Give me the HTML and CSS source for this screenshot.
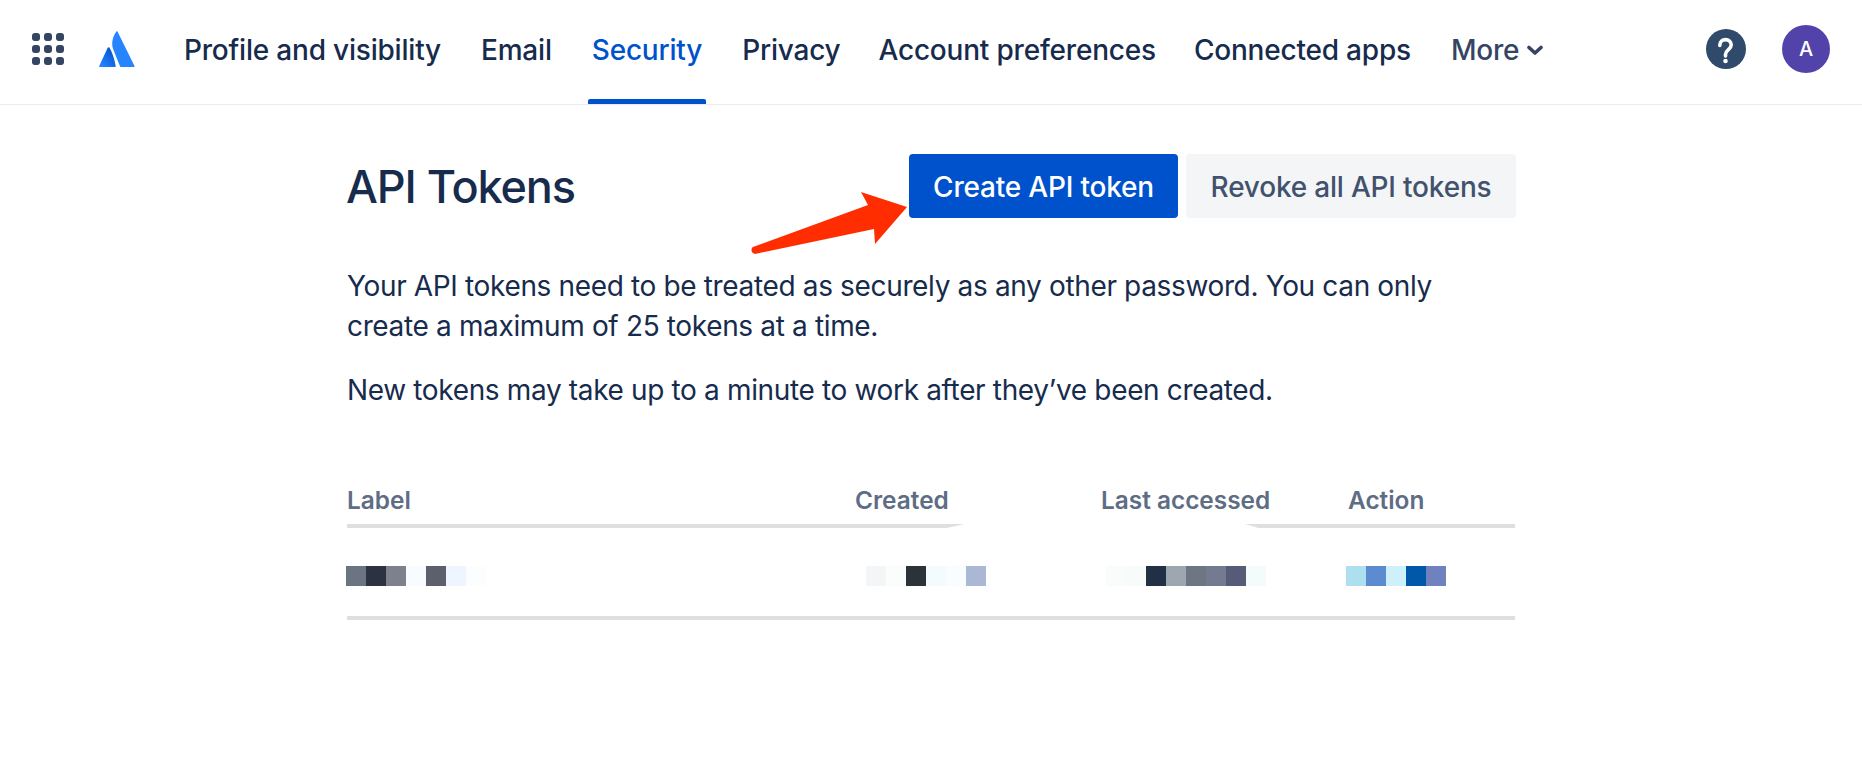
FILE: index.html
```html
<!DOCTYPE html>
<html lang="en">
<head>
<meta charset="utf-8">
<title>API Tokens</title>
<link rel="stylesheet" href="styles.css">
</head>
<body>
<header class="topbar">
  <svg class="apps" width="32" height="32" viewBox="0 0 32 32" aria-hidden="true">
    <rect x="0" y="0" width="8" height="8" rx="3"/><rect x="12" y="0" width="8" height="8" rx="3"/><rect x="24" y="0" width="8" height="8" rx="3"/>
    <rect x="0" y="12" width="8" height="8" rx="3"/><rect x="12" y="12" width="8" height="8" rx="3"/><rect x="24" y="12" width="8" height="8" rx="3"/>
    <rect x="0" y="24" width="8" height="8" rx="3"/><rect x="12" y="24" width="8" height="8" rx="3"/><rect x="24" y="24" width="8" height="8" rx="3"/>
  </svg>
  <svg class="logo" width="36" height="36" viewBox="0 0 36 36" aria-hidden="true">
    <defs><linearGradient id="blade" x1="1" y1="0.2" x2="0.2" y2="1"><stop offset="0" stop-color="#0052cc"/><stop offset="1" stop-color="#2684ff"/></linearGradient></defs>
    <path d="M10.200 16.800c-.4-.7-1.100-.7-1.500 0L.2 34.900c-.3.600 0 1.100.6 1.100h15.400c.4 0 .6-.5.500-.9-1.300-6.700-3.100-13.200-6.500-19.100z" fill="url(#blade)"/>
    <path d="M17.200.7c-3.200 4.400-5.200 11.200-3.100 17.300l7 17.500c.1.300.4.500.7.500h13.100c.6 0 .9-.6.600-1.100L18.600.7c-.3-.6-1-.6-1.400 0z" fill="#2684ff"/>
  </svg>
  <nav class="tabs">
    <a class="tab">Profile and visibility</a>
    <a class="tab">Email</a>
    <a class="tab active">Security</a>
    <a class="tab">Privacy</a>
    <a class="tab tight">Account preferences</a>
    <a class="tab tight">Connected apps</a>
    <a class="tab more">More
      <svg class="chev" width="16" height="11" viewBox="0 0 16 11" aria-hidden="true"><path d="M2 2.500l6 5.500 6-5.500" fill="none" stroke="#344563" stroke-width="3.600" stroke-linecap="round" stroke-linejoin="round"/></svg>
    </a>
  </nav>
  <div class="tools">
    <svg class="help" width="40" height="40" viewBox="0 0 40 40" role="img" aria-label="Help">
      <circle cx="20" cy="20" r="20" fill="#2f4a6b"/>
      <path d="M13.800 16.500c0-3.900 2.600-5.900 5.700-5.900s5.700 2 5.700 5.300c0 4.800-5.700 4.700-5.700 9.700v1.300" fill="none" stroke="#fff" stroke-width="3.600" stroke-linecap="round"/>
      <circle cx="19.500" cy="32" r="2.300" fill="#fff"/>
    </svg>
    <span class="avatar">A</span>
  </div>
</header>

<main class="page">
  <div class="title-row">
    <h1>API Tokens</h1>
    <div class="actions">
      <button class="btn primary">Create API token</button>
      <button class="btn subtle">Revoke all API tokens</button>
    </div>
  </div>
  <p class="lead">Your API tokens need to be treated as securely as any other password. You can only create a maximum of 25 tokens at a time.</p>
  <p class="note">New tokens may take up to a minute to work after they’ve been created.</p>

  <div class="table">
    <div class="head-row">
      <span>Label</span><span>Created</span><span>Last accessed</span><span>Action</span>
    </div>
    <div class="head-rule"><i class="seg left"></i><i class="seg right"></i></div>
    <div class="body-row">
      <svg width="1170" height="20" viewBox="0 0 1170 20" aria-hidden="true">
        <rect x="60" width="20" height="20" fill="#f8fbff"/>
        <rect x="0" width="20" height="20" fill="#6b7482"/><rect x="20" width="20" height="20" fill="#2c3242"/><rect x="40" width="20" height="20" fill="#7d818c"/>
        <rect x="80" width="20" height="20" fill="#5c5f6c"/><rect x="100" width="20" height="20" fill="#eef5ff"/><rect x="120" width="20" height="20" fill="#fbfdff"/>
        <rect x="520" width="20" height="20" fill="#f4f5f6"/><rect x="540" width="20" height="20" fill="#fbfcfc"/>
        <rect x="560" width="20" height="20" fill="#2c3338"/><rect x="580" width="20" height="20" fill="#f3fbff"/><rect x="600" width="20" height="20" fill="#fafdff"/><rect x="620" width="20" height="20" fill="#aab8d6"/>
        <rect x="760" width="20" height="20" fill="#fafcfb"/><rect x="780" width="20" height="20" fill="#f7fbfa"/>
        <rect x="800" width="20" height="20" fill="#213045"/><rect x="820" width="20" height="20" fill="#9ea6b0"/><rect x="840" width="20" height="20" fill="#6f7683"/><rect x="860" width="20" height="20" fill="#737b90"/><rect x="880" width="20" height="20" fill="#565c78"/><rect x="900" width="20" height="20" fill="#f3fbfb"/>
        <rect x="1000" width="20" height="20" fill="#aedfef"/><rect x="1020" width="20" height="20" fill="#5c8ccf"/><rect x="1040" width="20" height="20" fill="#cdf0fb"/><rect x="1060" width="20" height="20" fill="#0058ab"/><rect x="1080" width="20" height="20" fill="#6f82bf"/>
      </svg>
    </div>
    <div class="body-rule"></div>
  </div>
</main>

<svg class="arrow" width="170" height="70" viewBox="0 0 170 70" aria-hidden="true">
  <path d="M157 17L111 2 118 15 3 57c-2 1-2 5 0 6l2 1 119-25 1 15z" fill="#ff2d00"/>
</svg>
</body>
</html>
```

FILE: styles.css
```css
* { box-sizing: border-box; }
html, body { margin: 0; height: 100%; background: #fff; }
body {
  position: relative;
  font-family: Inter, "Liberation Sans", sans-serif;
  color: #172b4d;
  overflow: hidden;
}
.topbar {
  display: flex;
  align-items: center;
  height: 105px;
  padding: 0 32px 6px 32px;
  border-bottom: 1px solid #ebecf0;
}
.apps { fill: #344563; flex: none; }
.logo { flex: none; margin-left: 35px; }
.tabs {
  display: flex;
  align-items: center;
  margin-left: 29px;
  height: 98px;
}
.tab {
  position: relative;
  display: flex;
  align-items: center;
  height: 100%;
  padding: 2px 20px 0;
  font-size: 28px;
  font-weight: 500;
  letter-spacing: -0.2px;
  color: #172b4d;
  white-space: nowrap;
}
.tab.tight { margin-left: -2px; }
.tab.active { color: #0052cc; }
.tab.active::after {
  content: "";
  position: absolute;
  left: 16px;
  right: 16px;
  bottom: -6px;
  height: 5px;
  border-radius: 2px 2px 0 0;
  background: #0052cc;
}
.more { color: #344563; gap: 8px; }
.tools {
  display: flex;
  align-items: center;
  gap: 36px;
  margin-left: auto;
}
.help { display: block; flex: none; }
.avatar {
  display: flex;
  align-items: center;
  justify-content: center;
  width: 48px;
  height: 48px;
  border-radius: 50%;
  background: #5243aa;
  color: #fff;
  font-size: 20px;
  font-weight: 500;
}
.page {
  width: 1170px;
  margin: 0 0 0 346px;
  padding-top: 49px;
}
.title-row {
  display: flex;
  align-items: center;
  justify-content: space-between;
  height: 64px;
}
h1 {
  margin: 0;
  font-size: 45px;
  font-weight: 500;
  letter-spacing: -1.1px;
  color: #172b4d;
}
.actions { display: flex; gap: 8px; }
.btn {
  height: 64px;
  padding: 2px 0 0;
  border: 0;
  border-radius: 4px;
  font-family: inherit;
  font-size: 28px;
  font-weight: 500;
  letter-spacing: -0.2px;
}
.primary { width: 269px; background: #0052cc; color: #fff; }
.subtle { width: 330px; background: #f4f5f7; color: #42526e; }
.lead, .note {
  margin: 0 0 0 1px;
  font-size: 28px;
  letter-spacing: -0.35px;
  line-height: 40px;
  color: #172b4d;
}
.lead { margin-top: 48px; width: 1110px; }
.note { margin-top: 24px; }
.table { margin-top: 73px; }
.head-row {
  display: grid;
  grid-template-columns: 508px 246px 247px 1fr;
  padding-left: 1px;
  font-size: 24.4px;
  font-weight: 600;
  color: #5e6c84;
  line-height: 34px;
}
.head-rule {
  display: flex;
  justify-content: space-between;
  height: 4px;
  margin: 7px 0 0 1px;
  padding-right: 1px;
}
.seg { display: block; height: 4px; background: #dfdfdf; }
.seg.left { width: 618px; clip-path: polygon(0 0, 100% 0, 97% 100%, 0 100%); }
.seg.right { width: 270px; clip-path: polygon(0 0, 100% 0, 100% 100%, 5% 100%); }
.body-row { height: 88px; padding-top: 38px; }
.body-row svg { display: block; }
.body-rule { height: 4px; margin: 0 1px; background: #dfdfdf; }
.arrow { position: absolute; left: 750px; top: 190px; }
```
